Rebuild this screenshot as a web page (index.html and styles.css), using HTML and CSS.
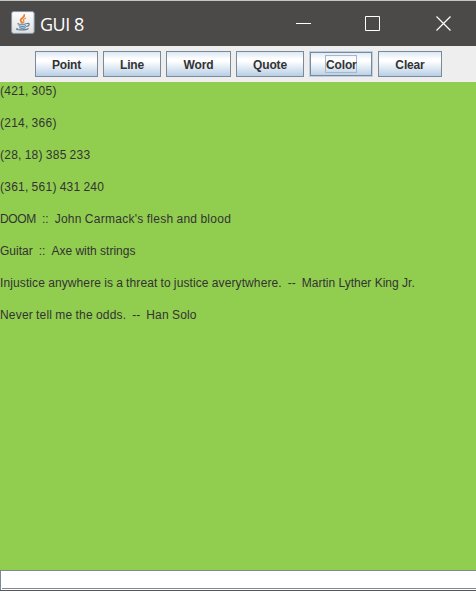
FILE: index.html
```html
<!DOCTYPE html>
<html lang="en">
<head>
<meta charset="utf-8">
<title>GUI 8</title>
<link rel="stylesheet" href="styles.css">
</head>
<body>
<div class="window">
  <header class="titlebar">
    <svg class="app-icon" width="24" height="24" viewBox="0 0 24 24">
      <defs><linearGradient id="tile" x1="0" y1="0" x2="0" y2="1"><stop offset="0" stop-color="#fff"/><stop offset="1" stop-color="#dedede"/></linearGradient></defs>
      <rect x=".6" y=".6" width="22.6" height="21.8" rx="2" fill="url(#tile)" stroke="#8296a5" stroke-width="1"/>
      <g fill="none" stroke-linecap="round">
        <path d="M13.2 4c1 2.6-4.4 3.2-3.6 5.6.2.9 1.3 1.5 1.700 2.200" stroke="#ee7d2e" stroke-width="1.8"/>
        <path d="M14.600 7.200c-2.400.8-2.600 1.800-1.800 2.700.3.5.1 1-.2 1.500" stroke="#ee8a42" stroke-width="1.200"/>
        <path d="M7.200 12.600c-1.500.7 5.600 1 8 .1M8 14.800c1.800.6 4.800.6 6.800 0M8.700 16.700c1.600.6 4 .6 5.500 0M16.300 12.500c2.600-.8 2.600 2.200-.5 3M6.300 17.600c-3.800 1.300 8.300 2.100 10.800.1" stroke="#587f9d" stroke-width="1.200"/>
      </g>
    </svg>
    <span class="title">GUI 8</span>
    <svg class="controls" width="156" height="16" viewBox="0 0 156 16" fill="none" stroke="#fff">
      <path d="M0 8.5h15"/>
      <path d="M69.500 1.500h14v14h-14z"/>
      <path d="M140.500 1.500l14 14M154.500 1.500l-14 14" stroke-width="1.2"/>
    </svg>
  </header>
  <div class="toolbar">
    <button class="btn point"><span>Point</span></button>
    <button class="btn line"><span>Line</span></button>
    <button class="btn word"><span>Word</span></button>
    <button class="btn quote"><span>Quote</span></button>
    <button class="btn color focused"><span>Color</span></button>
    <button class="btn clear"><span>Clear</span></button>
  </div>
  <main class="canvas">
    <p class="coords">(421, 305)</p>
    <p class="coords">(214, 366)</p>
    <p class="coords">(28, 18) 385 233</p>
    <p class="coords">(361, 561) 431 240</p>
    <p><span class="narrow">DOOM</span><span class="sep">  ::  </span><span class="wide">John Carmack's flesh and blood</span></p>
    <p>Guitar<span class="sep">  ::  </span>Axe with strings</p>
    <p><span class="quote-text">Injustice anywhere is a threat to justice averytwhere.</span><span class="sep">  --  </span>Martin Lyther King Jr.</p>
    <p><span class="short-quote">Never tell me the odds.</span><span class="sep">  --  </span><span class="short-quote">Han Solo</span></p>
  </main>
  <div class="field"></div>
</div>
</body>
</html>
```
FILE: styles.css
```css
* { box-sizing: border-box; }
body { margin: 0; overflow: hidden; }
.window {
  width: 476px;
  height: 591px;
  display: flex;
  flex-direction: column;
  background: #eee;
  border-bottom: 1px solid #5b5656;
  font-family: "Liberation Sans", Arial, sans-serif;
  color: #333;
}
.titlebar {
  height: 46px;
  flex: none;
  display: flex;
  align-items: flex-start;
  padding-left: 11px;
  background: #4c4a48;
  border-top: 1px solid #c3c7c2;
}
.app-icon { margin-top: 10px; }
.title {
  margin: 10px 0 0 5px;
  font: 18px/26px "Open Sans", "Noto Sans", sans-serif;
  letter-spacing: -0.5px;
  color: #fff;
}
.controls { margin: 14px 24px 0 auto; }
.toolbar {
  height: 36px;
  flex: none;
  display: flex;
  gap: 5px;
  padding: 5px 0 0 35px;
}
.btn {
  height: 26px;
  padding: 0;
  display: flex;
  align-items: center;
  justify-content: center;
  border: 1px solid #7a8a99;
  background: linear-gradient(#dde8f3 0%, #fff 30%, #fff 38%, #b8cfe5 100%);
  font: bold 12px/14px "Liberation Sans", Arial, sans-serif;
  letter-spacing: -0.15px;
  color: #333;
}
.btn span { padding: 2px 0 0; }
.point { width: 63px; }
.line { width: 58px; }
.word { width: 65px; }
.quote { width: 68px; }
.color { width: 64px; }
.clear { width: 64px; }
.focused { border-color: #b8cfe5; box-shadow: inset 0 0 0 1px #7a8a99; }
.focused span {
  width: 32px;
  height: 18px;
  line-height: 14px;
  border: 1px solid #a3b8cc;
}
.canvas {
  flex: 1;
  background: #91cd4f;
  padding-top: 1px;
}
.canvas p {
  margin: 0;
  height: 32px;
  font-size: 12px;
  line-height: 16px;
  white-space: pre;
}
.canvas .coords { letter-spacing: 0.25px; word-spacing: -0.58px; }
.narrow { letter-spacing: -0.35px; }
.wide { letter-spacing: 0.27px; word-spacing: -0.5px; }
.sep { word-spacing: -0.33px; }
.quote-text { letter-spacing: 0.11px; word-spacing: -0.33px; }
.short-quote { letter-spacing: 0.18px; word-spacing: -0.33px; }
.field {
  height: 20px;
  flex: none;
  background: linear-gradient(#7a8a99, #7a8a99) 1px 17px / 474px 1px no-repeat #fff;
  border: solid #7a8a99;
  border-width: 1px 0 0 1px;
}
```
